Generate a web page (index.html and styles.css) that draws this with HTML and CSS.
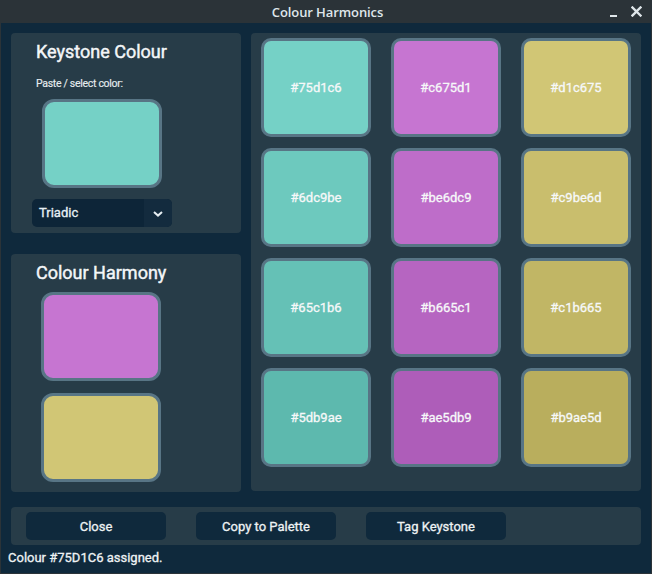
FILE: index.html
```html
<!DOCTYPE html>
<html>
<head>
<meta charset="utf-8">
<link rel="stylesheet" href="styles.css">
</head>
<body>
<div class="window">
  <div class="titlebar">
    <span class="title">Colour Harmonics</span>
    <div class="controls">
      <span class="min"></span>
      <svg class="close-x" width="11" height="11" viewBox="0 0 11 11"><path d="M1.5 1.5 L9.5 9.5 M9.5 1.5 L1.5 9.5" stroke="#dfe6ea" stroke-width="2.4" stroke-linecap="square"/></svg>
    </div>
  </div>
  <div class="main">
    <div class="leftcol">
      <div class="panel keystone">
        <div class="ptitle">Keystone Colour</div>
        <div class="label">Paste / select color:</div>
        <div class="swatch ks" style="background:#75d1c6"></div>
        <div class="dropdown">
          <span class="dd-text">Triadic</span>
          <span class="dd-arrow"><svg width="10" height="6" viewBox="0 0 10 6"><path d="M1 1 L5 4.6 L9 1" fill="none" stroke="#e6eef2" stroke-width="2"/></svg></span>
        </div>
      </div>
      <div class="panel harmony">
        <div class="ptitle">Colour Harmony</div>
        <div class="swatch hs hs-first" style="background:#c675d1"></div>
        <div class="swatch hs hs-next" style="background:#d1c675"></div>
      </div>
    </div>
    <div class="panel grid">
      <div class="tile" style="background:#75d1c6">#75d1c6</div>
      <div class="tile" style="background:#c675d1">#c675d1</div>
      <div class="tile" style="background:#d1c675">#d1c675</div>
      <div class="tile" style="background:#6dc9be">#6dc9be</div>
      <div class="tile" style="background:#be6dc9">#be6dc9</div>
      <div class="tile" style="background:#c9be6d">#c9be6d</div>
      <div class="tile" style="background:#65c1b6">#65c1b6</div>
      <div class="tile" style="background:#b665c1">#b665c1</div>
      <div class="tile" style="background:#c1b665">#c1b665</div>
      <div class="tile" style="background:#5db9ae">#5db9ae</div>
      <div class="tile" style="background:#ae5db9">#ae5db9</div>
      <div class="tile" style="background:#b9ae5d">#b9ae5d</div>
    </div>
  </div>
  <div class="buttonbar">
    <div class="btn">Close</div>
    <div class="btn">Copy to Palette</div>
    <div class="btn">Tag Keystone</div>
  </div>
  <div class="status">Colour #75D1C6 assigned.</div>
</div>
</body>
</html>
```
FILE: styles.css
```css
* { box-sizing: border-box; }
html, body { margin: 0; padding: 0; }
body {
  width: 652px;
  height: 574px;
  overflow: hidden;
  font-family: Roboto, "Liberation Sans", sans-serif;
  background: #2b3338;
}
.window {
  width: 652px;
  height: 574px;
  display: flex;
  flex-direction: column;
  background: #0f293c;
  border-left: 1px solid #2b3338;
  border-right: 1px solid #2b3338;
  border-bottom: 1px solid #2b3338;
}
.titlebar {
  height: 23px;
  flex: none;
  background: #2b3338;
  display: flex;
  align-items: center;
  justify-content: center;
  position: relative;
}
.title {
  font-family: "Open Sans", "DejaVu Sans", sans-serif;
  font-weight: 600;
  font-size: 13px;
  color: #dfe6ea;
  letter-spacing: -0.1px;
  margin-left: 3px;
}
.controls {
  position: absolute;
  right: 9px;
  top: 6px;
  display: flex;
  align-items: flex-end;
  gap: 14px;
}
.min {
  width: 7px;
  height: 2px;
  background: #dfe6ea;
}
.close-x { display: block; }
.main {
  display: flex;
  gap: 10px;
  padding: 10px 0 0 10px;
}
.leftcol {
  width: 230px;
  display: flex;
  flex-direction: column;
  gap: 21px;
}
.panel {
  background: #273c48;
  border-radius: 4px;
}
.keystone {
  height: 200px;
  padding: 8px 0 0 25px;
}
.harmony {
  height: 238px;
  padding: 8px 0 0 25px;
}
.medium {
  -webkit-text-stroke: 0.3px currentColor;
}
.ptitle {
  font-size: 18px;
  font-weight: 400;
  -webkit-text-stroke: 0.45px currentColor;
  color: #f3f6f8;
  line-height: 21px;
}
.label {
  font-size: 10.5px;
  color: #e6ecef;
  margin-top: 15px;
  line-height: 13px;
  letter-spacing: -0.3px;
  -webkit-text-stroke: 0.15px currentColor;
}
.swatch {
  width: 120px;
  height: 89px;
  border: 3px solid #587585;
  border-radius: 12px;
}
.ks {
  margin-top: 9px;
  margin-left: 6px;
}
.hs {
  margin-left: 5px;
}
.hs-first { margin-top: 9px; }
.hs-next { margin-top: 12px; }
.dropdown {
  margin-top: 11px;
  margin-left: -4px;
  width: 140px;
  height: 28px;
  border-radius: 5px;
  background: #0d2538;
  display: flex;
  overflow: hidden;
}
.dd-text {
  flex: 1;
  font-size: 13px;
  font-weight: 400;
  -webkit-text-stroke: 0.3px currentColor;
  color: #e8f0f5;
  padding-left: 7px;
  line-height: 28px;
}
.dd-arrow {
  width: 28px;
  background: #132b3e;
  display: flex;
  align-items: center;
  justify-content: center;
  padding-top: 1px;
}
.grid {
  width: 390px;
  height: 458px;
  padding: 5px 10px 0 10px;
  display: grid;
  grid-template-columns: repeat(3, 110px);
  grid-auto-rows: 99px;
  column-gap: 20px;
  row-gap: 11px;
  align-content: start;
}
.tile {
  border: 3px solid #587585;
  border-radius: 10px;
  display: flex;
  align-items: center;
  justify-content: center;
  font-size: 13px;
  font-weight: 400;
  -webkit-text-stroke: 0.3px currentColor;
  color: #f6f8f9;
}
.buttonbar {
  margin: 15px 0 0 10px;
  width: 630px;
  height: 38px;
  background: #273c48;
  border-radius: 4px;
  display: flex;
  align-items: center;
  gap: 30px;
  padding-left: 15px;
}
.btn {
  width: 140px;
  height: 28px;
  background: #0f293c;
  border-radius: 5px;
  display: flex;
  align-items: center;
  justify-content: center;
  font-size: 13px;
  font-weight: 400;
  -webkit-text-stroke: 0.3px currentColor;
  color: #eef2f4;
}
.status {
  margin-top: 4px;
  padding-left: 7px;
  font-size: 13px;
  font-weight: 400;
  -webkit-text-stroke: 0.3px currentColor;
  color: #eef2f4;
  line-height: 18px;
}
```
